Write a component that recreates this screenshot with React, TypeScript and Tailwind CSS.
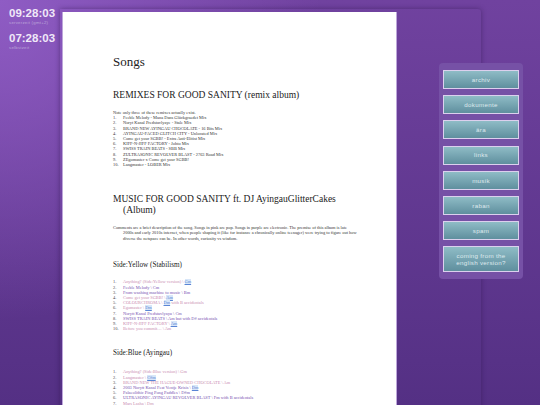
import React from 'react';

const navItems = ['archiv', 'dokumente', 'ära', 'links', 'musik', 'raban', 'spam'];

const remixes = [
  'Feeble Melody - Mana Dans Glückgraedet Mix',
  'Noryt Kanal Predstavlyaye - Stale Mix',
  'BRAND NEW AYINGAU CHOCOLATE - 16 Bits Mix',
  'AYINGAU-FACED GLITCH CITY - Unlocated Mix',
  'Come get your SGBB! - Extra Anti-Elitist Mix',
  'KIFF-N-JIFF FACTORY - Johto Mix',
  'SWISS TRAIN BEATS - SBB Mix',
  'ZULTRASONIC REVOLVER BLAST - 2763 Road Mix',
  'ZEgomaster x Come get your SGBB!',
  'Langmaster - LOBER Mix',
];

type Track = { text: string; key?: string; rest?: string; kind: 'pop' | 'electro' };

const sideYellow: Track[] = [
  { text: 'Anything? (Side:Yellow version) \\ ', key: 'Gm', kind: 'pop' },
  { text: 'Feeble Melody \\ Cm', kind: 'electro' },
  { text: 'From washing machine to music \\ Bm', kind: 'electro' },
  { text: 'Come get your SGBB! \\ ', key: 'Am', kind: 'pop' },
  { text: 'COLOURCHROMA \\ ', key: 'Dm', rest: ' with B accidentals', kind: 'pop' },
  { text: 'Egomaster \\ ', key: 'Dm', kind: 'pop' },
  { text: 'Norytt Kanal Predstavlyayu \\ Cm', kind: 'electro' },
  { text: 'SWISS TRAIN BEATS \\ Am but with D# accidentals', kind: 'electro' },
  { text: 'KIFF-N-JIFF FACTORY \\ ', key: 'Am', kind: 'pop' },
  { text: 'Before you commit… \\ Am', kind: 'pop' },
];

const sideBlue: Track[] = [
  { text: 'Anything? (Side:Blue version) \\ Gm', kind: 'pop' },
  { text: 'Langmaster \\ ', key: 'C#m', kind: 'pop' },
  { text: 'BRAND NEW THE HAGUE-OWNED CHOCOLATE \\ Am', kind: 'pop' },
  { text: '2003 Norytt Kanal Feat Ventje Krisis \\ ', key: 'Dm', kind: 'electro' },
  { text: 'Palaeolithic Ping Pong Paddles \\ D#m', kind: 'electro' },
  { text: 'ULTRASONIC AYINGAU REVOLVER BLAST \\ Fm with B accidentals', kind: 'electro' },
  { text: 'Mars Lasha \\ Dm', kind: 'pop' },
];

function TrackList({ tracks }: { tracks: Track[] }) {
  return (
    <ol className="text-[4.4px] leading-[5.2px]">
      {tracks.map((t, i) => (
        <li key={i} className="flex">
          <span className="w-[10px] shrink-0 text-[#444]">{i + 1}.</span>
          <span className={t.kind === 'pop' ? 'text-[#c98bb0]' : 'text-[#7650b0]'}>
            {t.text}
            {t.key && <a className="text-[#5a85d5] underline bg-[#d8e6f8]">{t.key}</a>}
            {t.rest}
          </span>
        </li>
      ))}
    </ol>
  );
}

function Clock({ time, label }: { time: string; label: string }) {
  return (
    <div>
      <div className="text-[11.5px] leading-[13px] font-bold text-[#f0e8f8]">{time}</div>
      <div className="text-[4.3px] leading-[6px] tracking-[0.25px] text-[#bda5da]">{label}</div>
    </div>
  );
}

export default function App() {
  return (
    <div
      className="w-[540px] h-[405px] overflow-hidden flex bg-[radial-gradient(circle_at_0_0,#8f5cc4,transparent_320px),linear-gradient(to_bottom,#70429f,#543084)]"
      style={{ fontFamily: '"Liberation Sans", sans-serif' }}
    >
      <aside className="w-[60px] shrink-0 pl-[9px] pt-[7px] flex flex-col gap-[6px]">
        <Clock time="09:28:03" label="serverzeit (gmt+2)" />
        <Clock time="07:28:03" label="selbstzeit" />
      </aside>

      <main className="w-[421px] shrink-0 mt-[9px] h-[420px] rounded-tr-[3px] shadow-[0_0_5px_rgba(45,20,75,0.5)] pl-[2px] flex">
        <div
          className="w-[335px] h-full mt-[3px] bg-white border-x border-[#bda6da] pl-[50px] pr-[39px] text-[#333]"
          style={{ fontFamily: '"Liberation Serif", serif' }}
        >
          <h1 className="pt-[41px] text-[13px] leading-[17px] text-[#222]">Songs</h1>

          <h2 className="mt-[20px] text-[9.5px] leading-[11px] text-[#222]">REMIXES FOR GOOD SANITY (remix album)</h2>
          <p className="mt-[9px] text-[4.4px] leading-[5.2px]">Note only three of these remixes actually exist.</p>
          <ol className="text-[4.4px] leading-[5.2px]">
            {remixes.map((r, i) => (
              <li key={i} className="flex">
                <span className="w-[10px] shrink-0">{i + 1}.</span>
                <span>{r}</span>
              </li>
            ))}
          </ol>

          <h2 className="mt-[27px] text-[9.5px] leading-[11px] pl-[10px] -indent-[10px] text-[#222]">
            MUSIC FOR GOOD SANITY ft. DJ AyingauGlitterCakes (Album)
          </h2>
          <p className="mt-[9px] text-[4.4px] leading-[5.2px] pl-[10px] -indent-[10px]">
            Comments are a brief description of the song. Songs in pink are pop. Songs in purple are electronic. The premise of this album is late 2000s and early 2010s internet, when people shaping it (like for instance a chronically online teenager) were trying to figure out how diverse the netspace can be. In other words, curiosity vs wisdom.
          </p>

          <h3 className="mt-[20.5px] text-[7.2px] leading-[9px] text-[#222]">Side:Yellow (Stabilism)</h3>
          <div className="mt-[9px]">
            <TrackList tracks={sideYellow} />
          </div>

          <h3 className="mt-[18px] text-[7.2px] leading-[9px] text-[#222]">Side:Blue (Ayingau)</h3>
          <div className="mt-[11px]">
            <TrackList tracks={sideBlue} />
          </div>
        </div>
      </main>

      <nav className="w-[84px] shrink-0 ml-[-42px] mt-[63px] self-start rounded-[4px] bg-[#7651a6] px-[4px] pt-[7px] pb-[6.5px] flex flex-col gap-[6.2px] relative">
        {navItems.map(item => (
          <a
            key={item}
            className="h-[19px] flex items-center justify-center border border-[#dcd0ee] bg-gradient-to-b from-[#8fbcc6] to-[#5f8f9e] text-[6.2px] tracking-[0.3px] text-[#dfeaee]"
          >
            {item}
          </a>
        ))}
        <a className="h-[26px] flex items-center justify-center text-center border border-[#dcd0ee] bg-gradient-to-b from-[#8fbcc6] to-[#5f8f9e] text-[6.2px] leading-[7.3px] tracking-[0.3px] text-[#dfeaee]">
          coming from the
          <br />
          english version?
        </a>
      </nav>
    </div>
  );
}
